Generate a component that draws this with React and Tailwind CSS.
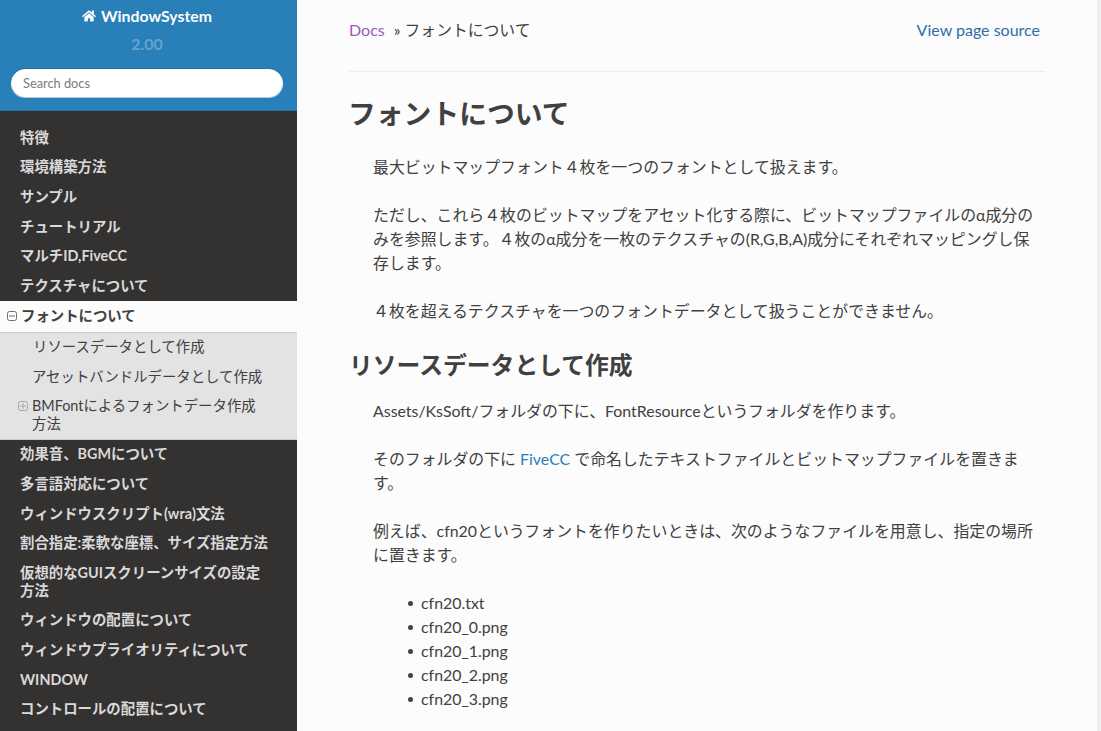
import { FaHome } from "react-icons/fa";

const font = "font-['Lato','Noto_Sans_CJK_JP','Noto_Sans',sans-serif]";

const before = ["特徴", "環境構築方法", "サンプル", "チュートリアル", "マルチID,FiveCC", "テクスチャについて"];
const after = [
  "効果音、BGMについて",
  "多言語対応について",
  "ウィンドウスクリプト(wra)文法",
  "割合指定:柔軟な座標、サイズ指定方法",
  "仮想的なGUIスクリーンサイズの設定方法",
  "ウィンドウの配置について",
  "ウィンドウプライオリティについて",
  "WINDOW",
  "コントロールの配置について",
];

function NavItem({ children }) {
  return (
    <a className="block pl-[20px] pr-[28px] py-[5.8px] text-[14.4px] leading-[18px] font-bold text-[#d9d9d9]">
      {children}
    </a>
  );
}

function Box({ open }) {
  return (
    <svg width="10" height="10" viewBox="0 0 10 10" className="shrink-0 text-current">
      <rect x="0.5" y="0.5" width="9" height="9" rx="2" fill="none" stroke="currentColor" />
      <path d="M2 5h6" stroke="currentColor" />
      {!open && <path d="M5 2v6" stroke="currentColor" />}
    </svg>
  );
}

function Sidebar() {
  return (
    <aside className="w-[297px] shrink-0 h-full overflow-hidden bg-[#343131]">
      <div className="h-[111px] bg-[#2980b9] border-b border-[#2472a4] pt-[7px] text-center">
        <div className="mr-[3px] flex items-center justify-center gap-[5px] h-[18px] text-[15.8px] font-bold text-[#fcfcfc]">
          <FaHome size={14} />
          WindowSystem
        </div>
        <div className="mr-[3px] mt-[10px] h-[18px] text-[16px] font-bold leading-[18px] text-white/30">2.00</div>
        <div className="mx-[11px] mt-[16px]">
          <input
            placeholder="Search docs"
            className="block w-[272px] h-[28px] rounded-full bg-white border border-white px-[11px] text-[12.8px] text-[#333] placeholder:text-[#7b7b7b] outline-none shadow-[0_-1px_0_#2472a4,0_1px_0_#a9cbe2]"
          />
        </div>
      </div>
      <nav className="pt-[12px]">
        {before.map((t) => (
          <NavItem key={t}>{t}</NavItem>
        ))}
        <div className="flex items-center gap-[4px] h-[31px] pl-[7px] bg-[#fcfcfc] text-[14.4px] font-bold text-[#404040]">
          <span className="text-[#6f6f6f]">
            <Box open />
          </span>
          フォントについて
        </div>
        <div className="bg-[#e3e3e3] border-y border-[#c9c9c9] text-[14.4px] leading-[18px] text-[#404040]">
          <div className="pl-[33px] pt-[5px] pb-[6px]">リソースデータとして作成</div>
          <div className="pl-[32px] py-[6px]">アセットバンドルデータとして作成</div>
          <div className="flex pl-[18px] pr-[34px] pt-[5px] pb-[6px]">
            <span className="w-[14px] shrink-0 pt-[4px] text-[#a8a8a8]">
              <Box />
            </span>
            <span>BMFontによるフォントデータ作成方法</span>
          </div>
        </div>
        {after.map((t) => (
          <NavItem key={t}>{t}</NavItem>
        ))}
      </nav>
    </aside>
  );
}

function Main() {
  return (
    <main className="flex-1 min-w-0 h-full overflow-hidden bg-[#fcfcfc] pl-[52px] text-[#404040]">
      <div className="w-[696px]">
        <div className="flex justify-between pt-[21px] pr-[5px] h-[71px] text-[16px] leading-[18px]">
          <div>
            <a className="text-[#9b59b6]">Docs</a>
            <span className="ml-[9px] text-[15.8px]">» フォントについて</span>
          </div>
          <a className="text-[#2d6ea8]">View page source</a>
        </div>
        <hr className="border-t border-[#e1e4e5] opacity-60" />
        <h1 className="mt-[24px] -ml-px h-[36px] text-[27.8px] leading-[36px] font-bold">フォントについて</h1>
        <div className="mt-[23px] pl-[24px] pr-[8px] text-[15.9px] leading-[24px]">
          <p>最大ビットマップフォント４枚を一つのフォントとして扱えます。</p>
          <p className="mt-[24px]">
            ただし、これら４枚のビットマップをアセット化する際に、ビットマップファイルのα成分のみを参照します。４枚のα成分を一枚のテクスチャの(R,G,B,A)成分にそれぞれマッピングし保存します。
          </p>
          <p className="mt-[24px]">４枚を超えるテクスチャを一つのフォントデータとして扱うことができません。</p>
        </div>
        <h2 className="mt-[27px] h-[30px] text-[23.8px] leading-[30px] font-bold">リソースデータとして作成</h2>
        <div className="mt-[19px] pl-[24px] pr-[8px] text-[15.9px] leading-[24px]">
          <p>Assets/KsSoft/フォルダの下に、FontResourceというフォルダを作ります。</p>
          <p className="mt-[24px]">
            そのフォルダの下に <a className="text-[#2980b9]">FiveCC</a> で命名したテキストファイルとビットマップファイルを置きます。
          </p>
          <p className="mt-[24px]">
            例えば、cfn20というフォントを作りたいときは、次のようなファイルを用意し、指定の場所に置きます。
          </p>
          <ul className="mt-[24px] pl-[35px]">
            {["cfn20.txt", "cfn20_0.png", "cfn20_1.png", "cfn20_2.png", "cfn20_3.png"].map((f) => (
              <li key={f} className="flex items-center gap-[8px]">
                <span className="w-[5px] h-[5px] rounded-full bg-[#404040]" />
                {f}
              </li>
            ))}
          </ul>
        </div>
      </div>
    </main>
  );
}

export default function App() {
  return (
    <div className={`flex h-[731px] w-[1101px] overflow-hidden bg-[#fcfcfc] ${font}`}>
      <Sidebar />
      <Main />
      <div className="w-[4px] shrink-0 bg-[#efefef]" />
    </div>
  );
}
